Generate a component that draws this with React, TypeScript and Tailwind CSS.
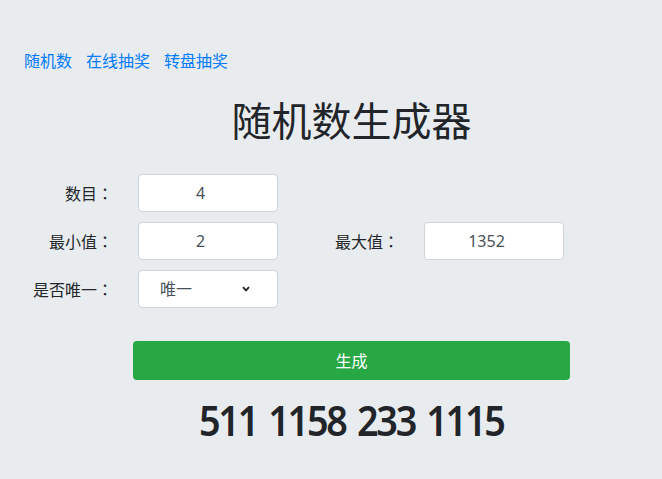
import { useState } from 'react';

const font = { fontFamily: '"Noto Sans", "Noto Sans CJK SC", sans-serif' };
const tc = { fontFamily: '"Noto Sans CJK TC", sans-serif' };

const Colon = () => <span style={tc}>：</span>;

const App = () => {
  const [count, setCount] = useState('4');
  const [min, setMin] = useState('2');
  const [max, setMax] = useState('1352');
  const [unique, setUnique] = useState('1');
  const [result, setResult] = useState('511 1158 233 1115');

  const generate = () => {
    const n = parseInt(count) || 0;
    const lo = parseInt(min) || 0;
    const hi = parseInt(max) || 0;
    const out: number[] = [];
    let guard = 0;
    while (out.length < n && guard < 10000) {
      guard++;
      const v = Math.floor(Math.random() * (hi - lo + 1)) + lo;
      if (unique === '1' && out.includes(v)) continue;
      out.push(v);
    }
    setResult(out.join(' '));
  };

  const inputCls =
    'w-[140px] h-[38px] bg-white border border-[#ced4da] rounded-[4px] pr-[15px] text-center text-base text-[#495057] outline-none';

  return (
    <div className="min-h-screen bg-[#e9ecef] text-[#212529] pt-[51px] px-6" style={font}>
      {/* Nav */}
      <nav className="flex gap-[14px] text-base leading-[20px] text-[#007bff]">
        <a href="#">随机数</a>
        <a href="#">在线抽奖</a>
        <a href="#">转盘抽奖</a>
      </nav>

      {/* Title */}
      <div className="w-[437px] ml-[109px] mt-[26px]">
        <h1 className="text-[40px] leading-[48px] text-center">随机数生成器</h1>
      </div>

      {/* Form */}
      <div className="mt-[29px] flex flex-col gap-[10px]">
        <div className="flex items-center">
          <label className="w-[89px] text-right text-base">数目<Colon /></label>
          <input className={`${inputCls} ml-[25px]`} value={count} onChange={(e) => setCount(e.target.value)} />
        </div>
        <div className="flex items-center">
          <label className="w-[89px] text-right text-base">最小值<Colon /></label>
          <input className={`${inputCls} ml-[25px]`} value={min} onChange={(e) => setMin(e.target.value)} />
          <label className="w-[89px] ml-8 text-right text-base">最大值<Colon /></label>
          <input className={`${inputCls} ml-[25px]`} value={max} onChange={(e) => setMax(e.target.value)} />
        </div>
        <div className="flex items-center">
          <label className="w-[89px] text-right text-base">是否唯一<Colon /></label>
          <div className="relative ml-[25px]">
            <select
              className="w-[140px] h-[38px] bg-white border border-[#ced4da] rounded-[4px] pl-[21px] text-base text-[#495057] appearance-none outline-none"
              value={unique}
              onChange={(e) => setUnique(e.target.value)}
            >
              <option value="1">唯一</option>
              <option value="0">不唯一</option>
            </select>
            <svg
              className="absolute right-[28px] top-[16px] w-[8px] h-[6px] pointer-events-none"
              viewBox="0 0 8 6"
            >
              <path d="M1 1.2 L4 4.4 L7 1.2" fill="none" stroke="#222" strokeWidth="1.8" />
            </svg>
          </div>
        </div>
      </div>

      {/* Button + result */}
      <div className="w-[437px] ml-[109px] mt-[33px]">
        <button
          onClick={generate}
          className="w-full h-[39px] bg-[#28a745] text-white text-base rounded-[4px]"
        >
          生成
        </button>
        <div className="mt-[16px] text-center">
          <span className="inline-block text-[42px] leading-[48px] font-semibold tracking-[-2.5px] [word-spacing:4px] scale-x-90">
            {result}
          </span>
        </div>
      </div>
    </div>
  );
};

export default App;
